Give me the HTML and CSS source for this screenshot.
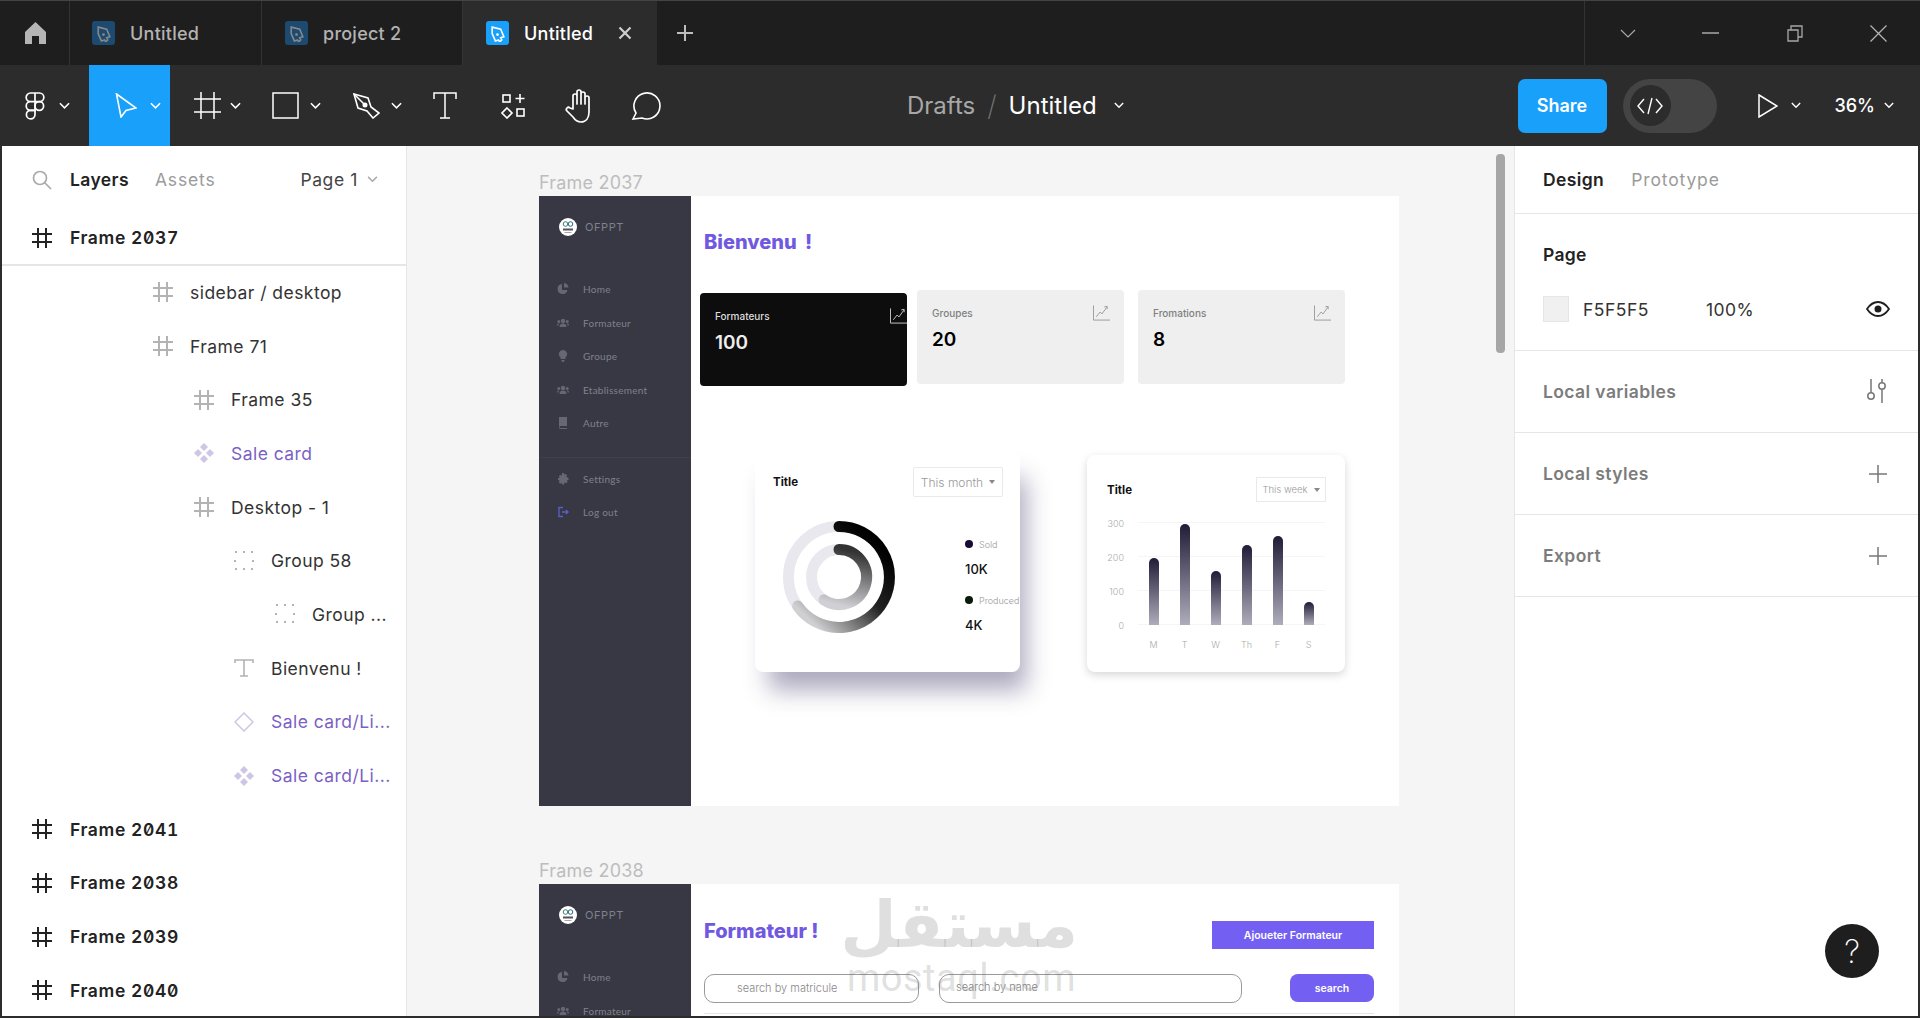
FILE: index.html
```html
<!DOCTYPE html>
<html lang="en">
<head>
    <meta charset="UTF-8">
    <meta name="viewport" content="width=device-width, initial-scale=1.0">
    <title>Untitled - Figma</title>
    <link rel="stylesheet" href="styles.css">
</head>
<body>
    <svg class="defs" width="0" height="0">
        <symbol id="hash" viewBox="0 0 20 20"><path d="M6 0v20M14 0v20M0 6h20M0 14h20" fill="none" stroke="currentColor" stroke-width="2"/></symbol>
        <symbol id="hash-thin" viewBox="0 0 27 27"><path d="M7 0v27M20 0v27M0 7h27M0 20h27" fill="none" stroke="currentColor" stroke-width="1.500"/></symbol>
        <symbol id="comp" viewBox="0 0 20 20"><path d="M10 0l4 4-4 4-4-4zM4 6l4 4-4 4-4-4zM16 6l4 4-4 4-4-4zM10 12l4 4-4 4-4-4z" fill="currentColor"/></symbol>
        <symbol id="group" viewBox="0 0 20 20"><path d="M1 1h2M9 1h2M17 1h2M1 9v2M19 9v2M1 18h2M9 18h2M17 18h2" fill="none" stroke="currentColor" stroke-width="2"/></symbol>
        <symbol id="chev" viewBox="0 0 12 8"><path d="M1 1l5 5 5-5" fill="none" stroke="currentColor" stroke-width="1.700"/></symbol>
        <symbol id="nib" viewBox="4 3 16 16"><path d="M7 5l8 2 3 7-3 1 1 2-2 2-1-2-3 1-3-7z" fill="none" stroke="currentColor" stroke-width="1.500"/><circle cx="12" cy="12" r="1.300" fill="currentColor"/></symbol>
        <symbol id="stat" viewBox="0 0 18 16"><path d="M.5 0v15.500H18M3.500 12l4-5 2 2 5-7M12 1.500l3-.5v3" fill="none" stroke="currentColor" stroke-width="1"/></symbol>
        <symbol id="m-pie" viewBox="0 0 12 12"><path d="M5 1a5 5 0 1 0 5.500 6H5zM7 0v4.500h4.500A5 5 0 0 0 7 0z" fill="currentColor"/></symbol>
        <symbol id="m-team" viewBox="0 0 12 12"><circle cx="6" cy="4" r="2.200" fill="currentColor"/><circle cx="1.800" cy="4.500" r="1.500" fill="currentColor"/><circle cx="10.200" cy="4.500" r="1.500" fill="currentColor"/><path d="M2.500 10c0-2.500 1.500-3.500 3.500-3.500s3.500 1 3.500 3.500zM0 8.500C0 7 .5 6.500 2 6.500l-.5 2zM12 8.500c0-1.500-.5-2-2-2l.5 2z" fill="currentColor"/></symbol>
        <symbol id="m-bulb" viewBox="0 0 12 12"><path d="M6 0a4 4 0 0 0-2.500 7.200V9h5V7.200A4 4 0 0 0 6 0zM4.500 10h3v1l-1 1h-1l-1-1z" fill="currentColor"/></symbol>
        <symbol id="m-book" viewBox="0 0 12 12"><path d="M2 0h8v9H3.500a1 1 0 0 0 0 2H10v1H3a1.500 1.500 0 0 1-1-1.500z" fill="currentColor"/></symbol>
        <symbol id="m-gear" viewBox="0 0 12 12"><path d="M5 0h2l.3 1.700 1.500-.8 1.400 1.400-.9 1.400L11.500 5v2l-1.700.3.900 1.500-1.400 1.400-1.500-.9L7 11.500H5l-.3-1.700-1.500.9-1.400-1.400.9-1.500L1 7V5l1.700-.3-.9-1.400 1.400-1.400 1.500.8z" fill="currentColor"/></symbol>
        <symbol id="m-out" viewBox="0 0 12 12"><path d="M6 1.500H2v9h4M5 6h6M9 4l2 2-2 2" fill="none" stroke="currentColor" stroke-width="1.300"/></symbol>
        <symbol id="logo" viewBox="0 0 18 18"><circle cx="9" cy="9" r="9" fill="#fff"/><circle cx="6.500" cy="6" r="2.300" fill="none" stroke="#2c8a6e" stroke-width="1"/><circle cx="11.500" cy="6" r="2.300" fill="none" stroke="#2c5f8a" stroke-width="1"/><path d="M4 10.500h10v2H4z" fill="#555"/><path d="M5.500 14h7v1h-7z" fill="#aaa"/></symbol>
    </svg>

    <div class="tabbar">
        <div class="tab tab-home">
            <svg width="21" height="22" viewBox="0 0 21 22"><path d="M10.500 0L21 10v12h-7v-8H7v8H0V10z" fill="#b5b5b5"/></svg>
        </div>
        <div class="tab tab-file tab-one">
            <span class="file-icon"><svg width="17" height="17"><use href="#nib"/></svg></span>
            <span>Untitled</span>
        </div>
        <div class="tab tab-file tab-two">
            <span class="file-icon"><svg width="17" height="17"><use href="#nib"/></svg></span>
            <span>project 2</span>
        </div>
        <div class="tab tab-file tab-active">
            <span class="file-icon"><svg width="17" height="17"><use href="#nib"/></svg></span>
            <span>Untitled</span>
            <svg class="tab-close" width="14" height="14" viewBox="0 0 14 14"><path d="M1.500 1.500l11 11M12.500 1.500l-11 11" stroke="#cfcfcf" stroke-width="2.200"/></svg>
        </div>
        <svg class="tab-plus" width="16" height="16" viewBox="0 0 16 16"><path d="M8 0v16M0 8h16" stroke="#bdbdbd" stroke-width="2"/></svg>
        <div class="win-controls">
            <svg class="win-chev" width="16" height="9" viewBox="0 0 16 9"><path d="M1 1l7 7 7-7" fill="none" stroke="#a8a8a8" stroke-width="1.200"/></svg>
            <svg class="win-min" width="17" height="2" viewBox="0 0 17 2"><path d="M0 1h17" stroke="#a8a8a8" stroke-width="1.500"/></svg>
            <svg class="win-max" width="16" height="17" viewBox="0 0 16 17"><path d="M1 5h10v11H1zM4 5V1h11v11h-4" fill="none" stroke="#a8a8a8" stroke-width="1.300"/></svg>
            <svg class="win-close" width="17" height="17" viewBox="0 0 17 17"><path d="M.5.500l16 16M16.500.500l-16 16" stroke="#b5b5b5" stroke-width="1.200"/></svg>
        </div>
    </div>

    <div class="toolbar">
        <div class="tools">
            <div class="tool tool-brand">
                <svg width="20" height="28" viewBox="0 0 20 28" fill="none" stroke="#fff" stroke-width="1.700"><path d="M10 1H5.500a4.300 4.300 0 0 0 0 8.700H10zM10 1h4.500a4.300 4.300 0 0 1 0 8.700H10zM10 9.700H5.500a4.200 4.200 0 0 0 0 8.600H10z"/><circle cx="14.300" cy="14" r="4.300"/><path d="M10 18.300H5.500a4.300 4.300 0 1 0 4.500 4.300z"/></svg>
                <svg class="chev" width="11" height="8"><use href="#chev"/></svg>
            </div>
            <div class="tool tool-move">
                <svg width="22" height="25" viewBox="0 0 22 25"><path d="M1.500 1L21 15l-10 2.500L6 24z" fill="none" stroke="#fff" stroke-width="1.600"/></svg>
                <svg class="chev" width="11" height="8"><use href="#chev"/></svg>
            </div>
            <div class="tool tool-frame">
                <svg width="27" height="27"><use href="#hash-thin"/></svg>
                <svg class="chev" width="11" height="8"><use href="#chev"/></svg>
            </div>
            <div class="tool tool-rect">
                <svg width="27" height="27" viewBox="0 0 27 27"><rect x="1" y="1" width="25" height="25" fill="none" stroke="#fff" stroke-width="1.500"/></svg>
                <svg class="chev" width="11" height="8"><use href="#chev"/></svg>
            </div>
            <div class="tool tool-pen">
                <svg width="27" height="26" viewBox="0 0 27 26" fill="none" stroke="#fff" stroke-width="1.600"><path d="M1 1l14 4 3 9 8 6-6 5-6-7-9-3z"/><circle cx="12" cy="12" r="1.700" fill="#fff"/><path d="M1 1l11 11"/></svg>
                <svg class="chev" width="11" height="8"><use href="#chev"/></svg>
            </div>
            <div class="tool tool-text">
                <svg width="24" height="27" viewBox="0 0 24 27" fill="none" stroke="#fff" stroke-width="1.500"><path d="M1 7V1h22v6M12 1v25M7 26h10"/></svg>
            </div>
            <div class="tool tool-res">
                <svg width="25" height="26" viewBox="0 0 25 26" fill="none" stroke="#fff" stroke-width="1.600"><rect x="2" y="2" width="7" height="7"/><path d="M19 1v9M14.500 5.500h9"/><path d="M6 15l5 5-5 5-5-5z"/><rect x="16" y="16" width="7" height="7"/></svg>
            </div>
            <div class="tool tool-hand">
                <svg width="32" height="34" viewBox="0 0 32 34" fill="none" stroke="#fff" stroke-width="1.700" stroke-linejoin="round"><path d="M9 20V7a2 2 0 0 1 4 0v8-12a2 2 0 0 1 4 0v12V5a2 2 0 0 1 4 0v10-6a2 2 0 0 1 4 0v14c0 6-3 10-8 10-4 0-6-2-8-5l-6-6c-2-2 1-5 3-3z"/></svg>
            </div>
            <div class="tool tool-comment">
                <svg width="31" height="28" viewBox="0 0 31 28"><path d="M2 27l3-6a13 13 0 1 1 6 5z" fill="none" stroke="#fff" stroke-width="1.600"/></svg>
            </div>
        </div>
        <div class="crumbs">
            <span class="crumb-dim">Drafts</span>
            <span class="crumb-sep">/</span>
            <span class="crumb-name">Untitled</span>
            <svg class="chev" width="10" height="7"><use href="#chev"/></svg>
        </div>
        <div class="actions">
            <div class="share">Share</div>
            <div class="dev-toggle">
                <span class="dev-knob"><svg width="26" height="20" viewBox="0 0 26 20" fill="none" stroke="#fff" stroke-width="1.400"><path d="M7 3L1 10l6 7M19 3l6 7-6 7M15 2l-4 16"/></svg></span>
            </div>
            <svg class="play" width="20" height="24" viewBox="0 0 20 24"><path d="M1 1l18 11L1 23z" fill="none" stroke="#fff" stroke-width="1.500"/></svg>
            <svg class="chev" width="10" height="7"><use href="#chev"/></svg>
            <span class="zoom-value">36%</span>
            <svg class="chev" width="10" height="7"><use href="#chev"/></svg>
        </div>
    </div>

    <div class="workspace">
        <aside class="layers">
            <div class="layers-tabs">
                <svg class="search-icon" width="20" height="20" viewBox="0 0 20 20" fill="none" stroke="#aaa" stroke-width="1.700"><circle cx="8" cy="8" r="6.500"/><path d="M12.500 12.500L19 19"/></svg>
                <span class="tab-strong">Layers</span>
                <span class="tab-muted">Assets</span>
                <span class="page-pick">Page 1 <svg width="11" height="7"><use href="#chev"/></svg></span>
            </div>
            <div class="row row-top row-pinned"><svg class="ic" width="20" height="20"><use href="#hash"/></svg>Frame 2037</div>
            <div class="rows">
                <div class="row d2"><svg class="ic" width="20" height="20"><use href="#hash"/></svg>sidebar / desktop</div>
                <div class="row d2"><svg class="ic" width="20" height="20"><use href="#hash"/></svg>Frame 71</div>
                <div class="row d3"><svg class="ic" width="20" height="20"><use href="#hash"/></svg>Frame 35</div>
                <div class="row d3 purple"><svg class="ic" width="20" height="20"><use href="#comp"/></svg>Sale card</div>
                <div class="row d3"><svg class="ic" width="20" height="20"><use href="#hash"/></svg>Desktop - 1</div>
                <div class="row d4"><svg class="ic" width="20" height="20"><use href="#group"/></svg>Group 58</div>
                <div class="row d5"><svg class="ic" width="20" height="20"><use href="#group"/></svg>Group ...</div>
                <div class="row d4"><svg class="ic" width="20" height="20" viewBox="0 0 20 20" fill="none" stroke="currentColor" stroke-width="1.600"><path d="M1 5V2h18v3M10 2v16M6 18h8"/></svg>Bienvenu !</div>
                <div class="row d4 purple"><svg class="ic" width="20" height="20" viewBox="0 0 20 20"><path d="M10 1l9 9-9 9-9-9z" fill="none" stroke="currentColor" stroke-width="1.500"/></svg>Sale card/Li...</div>
                <div class="row d4 purple"><svg class="ic" width="20" height="20"><use href="#comp"/></svg>Sale card/Li...</div>
                <div class="row row-top"><svg class="ic" width="20" height="20"><use href="#hash"/></svg>Frame 2041</div>
                <div class="row row-top"><svg class="ic" width="20" height="20"><use href="#hash"/></svg>Frame 2038</div>
                <div class="row row-top"><svg class="ic" width="20" height="20"><use href="#hash"/></svg>Frame 2039</div>
                <div class="row row-top"><svg class="ic" width="20" height="20"><use href="#hash"/></svg>Frame 2040</div>
            </div>
        </aside>

        <main class="canvas">
            <section class="artboard artboard-one">
                <div class="artboard-label">Frame 2037</div>
                <div class="frame">
                    <nav class="side">
                        <div class="side-logo"><svg width="18" height="18"><use href="#logo"/></svg>OFPPT</div>
                        <div class="side-menu">
                            <div class="side-item"><svg width="12" height="12"><use href="#m-pie"/></svg>Home</div>
                            <div class="side-item"><svg width="12" height="12"><use href="#m-team"/></svg>Formateur</div>
                            <div class="side-item"><svg width="12" height="12"><use href="#m-bulb"/></svg>Groupe</div>
                            <div class="side-item"><svg width="12" height="12"><use href="#m-team"/></svg>Etablissement</div>
                            <div class="side-item"><svg width="12" height="12"><use href="#m-book"/></svg>Autre</div>
                        </div>
                        <div class="side-foot">
                            <div class="side-item"><svg width="12" height="12"><use href="#m-gear"/></svg>Settings</div>
                            <div class="side-item side-logout"><svg width="12" height="12"><use href="#m-out"/></svg>Log out</div>
                        </div>
                    </nav>
                    <div class="board">
                        <h1 class="board-title">Bienvenu !</h1>
                        <div class="stats">
                            <div class="stat stat-dark">
                                <div class="stat-label">Formateurs</div>
                                <div class="stat-value">100</div>
                                <svg class="stat-icon" width="17" height="16"><use href="#stat"/></svg>
                            </div>
                            <div class="stat">
                                <div class="stat-label">Groupes</div>
                                <div class="stat-value">20</div>
                                <svg class="stat-icon" width="17" height="16"><use href="#stat"/></svg>
                            </div>
                            <div class="stat stat-last">
                                <div class="stat-label">Fromations</div>
                                <div class="stat-value">8</div>
                                <svg class="stat-icon" width="17" height="16"><use href="#stat"/></svg>
                            </div>
                        </div>
                        <div class="charts">
                            <div class="chart-card donut-card">
                                <div class="chart-head">
                                    <span class="chart-title">Title</span>
                                    <span class="picker picker-month">This month <i class="caret"></i></span>
                                </div>
                                <div class="donut-body">
                                    <svg class="donut" width="112" height="112" viewBox="0 0 112 112" fill="none">
                                        <defs>
                                            <linearGradient id="ringA" x1="0.8" y1="0.1" x2="0.1" y2="0.9">
                                                <stop offset="0" stop-color="#000"/>
                                                <stop offset="0.45" stop-color="#222"/>
                                                <stop offset="1" stop-color="#d0d0d2"/>
                                            </linearGradient>
                                            <linearGradient id="ringB" x1="0.5" y1="0" x2="0.3" y2="1">
                                                <stop offset="0" stop-color="#333"/>
                                                <stop offset="1" stop-color="#d0d0d4"/>
                                            </linearGradient>
                                        </defs>
                                        <circle cx="56" cy="56" r="50.500" stroke="#e9e8ee" stroke-width="11"/>
                                        <circle cx="56" cy="56" r="27.500" stroke="#e9e8ee" stroke-width="11"/>
                                        <path d="M56 5.500A50.500 50.500 0 1 1 14.600 85" stroke="url(#ringA)" stroke-width="11" stroke-linecap="round"/>
                                        <path d="M56 28.500A27.500 27.500 0 1 1 41 79" stroke="url(#ringB)" stroke-width="11" stroke-linecap="round"/>
                                    </svg>
                                    <div class="legend">
                                        <div class="legend-name"><i class="dot dot-sold"></i>Sold</div>
                                        <div class="legend-value">10K</div>
                                        <div class="legend-name legend-second"><i class="dot dot-prod"></i>Produced</div>
                                        <div class="legend-value">4K</div>
                                    </div>
                                </div>
                            </div>
                            <div class="chart-card bars-card">
                                <div class="chart-head">
                                    <span class="chart-title">Title</span>
                                    <span class="picker picker-week">This week <i class="caret"></i></span>
                                </div>
                                <div class="bars-body">
                                    <div class="y-axis"><span>300</span><span>200</span><span>100</span><span>0</span></div>
                                    <div class="plot-wrap">
                                        <div class="plot">
                                            <div class="bar-col"><i class="bar" style="height:67px"></i></div>
                                            <div class="bar-col"><i class="bar" style="height:101px"></i></div>
                                            <div class="bar-col"><i class="bar" style="height:54px"></i></div>
                                            <div class="bar-col"><i class="bar" style="height:80px"></i></div>
                                            <div class="bar-col"><i class="bar" style="height:89px"></i></div>
                                            <div class="bar-col"><i class="bar" style="height:23px"></i></div>
                                        </div>
                                        <div class="x-axis"><span>M</span><span>T</span><span>W</span><span>Th</span><span>F</span><span>S</span></div>
                                    </div>
                                </div>
                            </div>
                        </div>
                    </div>
                </div>
            </section>

            <section class="artboard artboard-two">
                <div class="artboard-label">Frame 2038</div>
                <div class="frame">
                    <nav class="side">
                        <div class="side-logo"><svg width="18" height="18"><use href="#logo"/></svg>OFPPT</div>
                        <div class="side-menu">
                            <div class="side-item"><svg width="12" height="12"><use href="#m-pie"/></svg>Home</div>
                            <div class="side-item"><svg width="12" height="12"><use href="#m-team"/></svg>Formateur</div>
                            <div class="side-item"><svg width="12" height="12"><use href="#m-bulb"/></svg>Groupe</div>
                        </div>
                    </nav>
                    <div class="board board-list">
                        <div class="list-head">
                            <h1 class="board-title">Formateur !</h1>
                            <div class="add-btn">Ajoueter Formateur</div>
                        </div>
                        <div class="filters">
                            <div class="field field-one">search by matricule</div>
                            <div class="field field-two">search by name</div>
                            <div class="search-btn">search</div>
                        </div>
                        <div class="table-line"></div>
                    </div>
                </div>
            </section>

            <div class="scrollbar"></div>
        </main>

        <aside class="props">
            <div class="props-tabs">
                <span class="tab-strong">Design</span>
                <span class="tab-muted">Prototype</span>
            </div>
            <div class="props-page">
                <div class="page-title">Page</div>
                <div class="page-fill">
                    <span class="swatch"></span>
                    <span class="fill-hex">F5F5F5</span>
                    <span class="fill-pct">100%</span>
                    <svg class="eye" width="24" height="16" viewBox="0 0 24 16"><path d="M1 8c3-4.500 7-7 11-7s8 2.500 11 7c-3 4.500-7 7-11 7S4 12.500 1 8z" fill="none" stroke="#1e1e1e" stroke-width="1.800"/><circle cx="12" cy="8" r="3.500" fill="#1e1e1e"/></svg>
                </div>
            </div>
            <div class="prop-row">
                <span>Local variables</span>
                <svg width="21" height="25" viewBox="0 0 21 25" fill="none" stroke="#777" stroke-width="1.500"><path d="M5 0v14M16 0v24"/><circle cx="5" cy="17" r="3.200" fill="#fff"/><circle cx="16" cy="7" r="3.200" fill="#fff"/></svg>
            </div>
            <div class="prop-row">
                <span>Local styles</span>
                <svg width="18" height="18" viewBox="0 0 18 18"><path d="M9 0v18M0 9h18" stroke="#777" stroke-width="1.500"/></svg>
            </div>
            <div class="prop-row">
                <span>Export</span>
                <svg width="18" height="18" viewBox="0 0 18 18"><path d="M9 0v18M0 9h18" stroke="#777" stroke-width="1.500"/></svg>
            </div>
            <div class="help">?</div>
        </aside>
    </div>

    <div class="watermark">
        <div class="wm-ar" lang="ar" dir="rtl">مستقل</div>
        <div class="wm-en">mostaql.com</div>
    </div>
</body>
</html>
```

FILE: styles.css
```css
* {
    box-sizing: border-box;
}
html, body {
    margin: 0;
    height: 100%;
}
body {
    position: relative;
    width: 1920px;
    height: 1018px;
    overflow: hidden;
    font-family: Inter, "Noto Sans", sans-serif;
    background: #1e1e1e;
    color: #222;
}
.defs {
    position: absolute;
}
svg {
    flex: none;
    display: block;
}

/* tabs */
.tabbar {
    display: flex;
    align-items: stretch;
    height: 65px;
    background: #1e1e1e;
    border-top: 1px solid #444;
    color: #b3b3b3;
    font-size: 18px;
    font-weight: 500;
    letter-spacing: 0.25px;
}
.tab {
    display: flex;
    align-items: center;
    border-right: 1px solid #333;
}
.tab-home {
    width: 70px;
    padding-left: 25px;
}
.tab-file {
    gap: 15px;
}
.tab-one {
    width: 192px;
    padding-left: 22px;
}
.tab-two {
    width: 201px;
    padding-left: 23px;
}
.tab-active {
    width: 194px;
    padding-left: 23px;
    background: #2c2c2c;
    color: #fff;
    border-right: 0;
}
.file-icon {
    display: flex;
    align-items: center;
    justify-content: center;
    width: 23px;
    height: 24px;
    border-radius: 3px;
    background: #1c4a70;
    color: #888;
}
.tab-active .file-icon {
    background: #18a0fb;
    color: #fff;
}
.tab-close {
    margin-left: 10px;
}
.tab-plus {
    align-self: center;
    margin-left: 20px;
}
.win-controls {
    position: relative;
    display: flex;
    align-items: center;
    margin-left: auto;
    width: 336px;
    padding-left: 35px;
    border-left: 1px solid #333;
}
.win-min {
    margin-left: 66px;
}
.win-max {
    margin-left: 68px;
}
.win-close {
    margin-left: 67px;
}

/* toolbar */
.toolbar {
    display: flex;
    align-items: center;
    height: 81px;
    background: #2c2c2c;
    color: #fff;
}
.tools {
    display: flex;
    width: 907px;
    height: 100%;
}
.tool {
    display: flex;
    align-items: center;
    height: 100%;
    gap: 11px;
}
.chev {
    color: #fff;
}
.tool-brand {
    width: 89px;
    padding-left: 25px;
    gap: 14px;
}
.tool-move {
    width: 81px;
    padding-left: 26px;
    gap: 13px;
    background: #18a0fb;
}
.tool-frame {
    width: 102px;
    padding-left: 24px;
    gap: 9px;
}
.tool-rect {
    width: 81px;
}
.tool-pen {
    width: 80px;
}
.tool-text {
    width: 68px;
}
.tool-res {
    width: 63px;
}
.tool-hand {
    width: 67px;
}
.crumbs {
    display: flex;
    align-items: center;
    font-size: 24px;
}
.crumb-dim {
    color: #a8a8a8;
}
.crumb-sep {
    margin: 0 12px;
    color: #777;
    font-weight: 200;
    font-size: 28px;
}
.crumb-name {
    margin-right: 17px;
}
.actions {
    display: flex;
    align-items: center;
    margin-left: auto;
    padding-right: 26px;
}
.share {
    display: flex;
    align-items: center;
    justify-content: center;
    width: 89px;
    height: 54px;
    border-radius: 7px;
    background: #18a0fb;
    font-size: 18px;
    font-weight: 600;
}
.dev-toggle {
    display: flex;
    align-items: center;
    width: 94px;
    height: 54px;
    margin-left: 16px;
    padding-left: 7px;
    border-radius: 27px;
    background: #444;
}
.dev-knob {
    display: flex;
    align-items: center;
    justify-content: center;
    width: 41px;
    height: 41px;
    border-radius: 50%;
    background: #2c2c2c;
}
.play {
    margin-left: 41px;
}
.play + .chev {
    margin-left: 13px;
}
.zoom-value {
    margin: 0 9px 0 34px;
    font-size: 18px;
    font-weight: 500;
}

/* main area */
.workspace {
    display: flex;
    height: 872px;
    border: solid #2c2c2c;
    border-width: 0 2px 2px;
    background: #fff;
}
.layers {
    flex: none;
    width: 405px;
    border-right: 1px solid #e6e6e6;
    background: #fff;
    font-size: 17.5px;
    overflow: hidden;
}
.layers-tabs {
    position: relative;
    display: flex;
    align-items: center;
    height: 67px;
    padding-left: 30px;
}
.search-icon {
    margin-right: 18px;
}
.tab-strong {
    font-weight: 600;
    letter-spacing: 0.4px;
    color: #222;
}
.tab-muted {
    margin-left: 26px;
    color: #9b9b9b;
    letter-spacing: 0.85px;
}
.page-pick {
    display: flex;
    align-items: center;
    gap: 9px;
    margin-left: auto;
    margin-right: 28px;
    color: #444;
    letter-spacing: 0.6px;
}
.page-pick svg {
    color: #aaa;
}
.row {
    display: flex;
    align-items: center;
    height: 53.7px;
    white-space: nowrap;
    letter-spacing: 0.45px;
    color: #333;
}
.ic {
    margin-right: 17px;
    color: #b3b3b3;
}
.row-top {
    padding-left: 31px;
    font-weight: 600;
    letter-spacing: 0.6px;
    color: #222;
    font-feature-settings: "zero", "tnum";
}
.row-top .ic {
    margin-left: -1px;
    margin-right: 18px;
    color: #222;
}
.row-pinned {
    height: 55px;
    margin-top: -2px;
    border-bottom: 2px solid #e6e6e6;
}
.rows {
    margin-top: -0.5px;
}
.d2 {
    padding-left: 151px;
}
.d3 {
    padding-left: 192px;
}
.d4 {
    padding-left: 232px;
}
.d5 {
    padding-left: 273px;
}
.purple {
    color: #7b5fc4;
}
.purple .ic {
    color: #cfc5e6;
}

/* canvas */
.canvas {
    position: relative;
    flex: 1;
    overflow: hidden;
    background: #f5f5f5;
}
.artboard {
    position: absolute;
    left: 132px;
    width: 860px;
}
.artboard-one {
    top: 25px;
}
.artboard-two {
    top: 713px;
}
.artboard-label {
    height: 22px;
    margin-bottom: 3px;
    font-size: 18px;
    line-height: 24px;
    letter-spacing: 0.2px;
    color: #bdbdbd;
}
.frame {
    display: flex;
    height: 610px;
    background: #fff;
}
.side {
    flex: none;
    width: 152px;
    padding-top: 22px;
    background: #373843;
    color: #80818b;
    font-size: 10px;
}
.side-logo {
    display: flex;
    align-items: center;
    gap: 8px;
    height: 18px;
    padding-left: 20px;
    font-family: Inter, sans-serif;
    font-size: 11px;
    letter-spacing: 0.6px;
}
.side-menu {
    margin-top: 36.5px;
    height: 185.5px;
    border-bottom: 1px solid #3f404b;
}
.side-foot {
    margin-top: 4px;
}
.side-item {
    display: flex;
    align-items: center;
    gap: 14px;
    height: 33.5px;
    padding-left: 18px;
    font-family: Lato, sans-serif;
    font-size: 10px;
    letter-spacing: 0.25px;
}
.side-item svg {
    color: #666772;
}
.side-logout svg {
    color: #5c5fc8;
}
.board {
    flex: 1;
    min-width: 0;
    padding-top: 34px;
}
.board-title {
    margin: 0 0 0 13px;
    font-size: 20px;
    line-height: 24px;
    font-weight: 800;
    color: #7059e0;
    word-spacing: 4px;
}
.stats {
    display: flex;
    align-items: flex-start;
    gap: 10px;
    margin-top: 36px;
    padding-left: 9px;
}
.stat {
    position: relative;
    width: 207px;
    height: 94px;
    padding: 15px 15px 0;
    border-radius: 4px;
    background: #efefef;
    color: #000;
}
.stat-dark {
    margin-top: 3px;
    height: 93px;
    background: #0d0d0d;
    color: #eee;
    overflow: hidden;
}
.stat-last {
    margin-left: 4px;
}
.stat-label {
    font-size: 10px;
    line-height: 16px;
    font-weight: 500;
    color: #808080;
}
.stat-dark .stat-label {
    color: #ddd;
}
.stat-value {
    margin-top: 4px;
    font-size: 19px;
    line-height: 30px;
    font-weight: 600;
}
.stat-icon {
    position: absolute;
    top: 15px;
    right: 14px;
    color: #999;
}
.stat-dark .stat-icon {
    right: 0;
    color: #ccc;
}
.charts {
    display: flex;
    align-items: flex-start;
    gap: 67px;
    margin-top: 66px;
    margin-left: 64px;
}
.chart-card {
    flex: none;
    border-radius: 8px;
    background: #fff;
}
.donut-card {
    width: 265px;
    height: 220px;
    box-shadow: 10px 22px 24px -4px rgba(60, 50, 100, 0.42);
}
.bars-card {
    width: 258px;
    height: 217px;
    margin-top: 3px;
    box-shadow: 0 3px 8px rgba(0, 0, 0, 0.16);
}
.chart-head {
    display: flex;
    align-items: center;
    justify-content: space-between;
}
.donut-card .chart-head {
    padding: 15px 17px 0 18px;
    height: 45px;
}
.bars-card .chart-head {
    padding: 22px 19px 0 20px;
    height: 47px;
}
.chart-title {
    font-size: 11.500px;
    font-weight: 700;
    color: #111;
}
.picker {
    display: flex;
    align-items: center;
    justify-content: center;
    gap: 6px;
    border: 1px solid #e9e9e9;
    color: #999;
    font-weight: 300;
}
.picker-month {
    width: 90px;
    height: 30px;
    border-radius: 2px;
    font-size: 12px;
}
.picker-week {
    width: 70px;
    height: 25px;
    font-size: 9.500px;
}
.caret {
    width: 0;
    height: 0;
    border: 3px solid transparent;
    border-top: 4px solid #888;
    border-bottom: 0;
}
.donut-body {
    display: flex;
    padding: 24px 0 0 28px;
}
.legend {
    width: 55px;
    margin-left: 70px;
    padding-top: 17px;
    overflow: hidden;
    white-space: nowrap;
}
.legend-name {
    display: flex;
    align-items: center;
    gap: 6px;
    height: 12px;
    font-size: 9px;
    font-weight: 300;
    color: #999;
}
.legend-second {
    margin-top: 17px;
}
.legend-value {
    margin-top: 11px;
    font-size: 13px;
    line-height: 16px;
    font-weight: 500;
    color: #111;
}
.dot {
    flex: none;
    width: 8px;
    height: 8px;
    border-radius: 50%;
    background: #1a0a3a;
}
.dot-prod {
    background: #0a1a0a;
}
.bars-body {
    display: flex;
    margin-top: 22px;
}
.y-axis {
    display: flex;
    flex-direction: column;
    justify-content: space-between;
    width: 37px;
    height: 114px;
    margin-top: -6px;
    text-align: right;
    font-size: 9px;
    line-height: 12px;
    font-weight: 300;
    color: #aaa;
}
.plot-wrap {
    margin-top: -2px;
    margin-left: 14px;
}
.plot {
    display: grid;
    grid-template-columns: repeat(6, 31px);
    align-items: end;
    width: 187px;
    height: 103px;
    background: repeating-linear-gradient(#f5f5f6 0 1px, transparent 1px 34px);
}
.bar-col {
    display: flex;
    justify-content: center;
    align-items: flex-end;
    height: 102px;
}
.bar {
    display: block;
    width: 10px;
    border-radius: 5px 5px 0 0;
    background: linear-gradient(#201c38, #aeadba);
}
.x-axis {
    display: grid;
    grid-template-columns: repeat(6, 31px);
    margin-top: 14px;
    text-align: center;
    font-size: 9px;
    line-height: 12px;
    font-weight: 300;
    color: #aaa;
}
.board-list {
    padding-top: 37px;
}
.list-head {
    display: flex;
    align-items: flex-start;
    justify-content: space-between;
    height: 28px;
    padding-right: 25px;
}
.list-head .board-title {
    line-height: 20px;
    word-spacing: 0;
}
.add-btn {
    display: flex;
    align-items: center;
    justify-content: center;
    width: 162px;
    height: 28px;
    background: #7360f2;
    color: #fff;
    font-size: 10.500px;
    font-weight: 600;
}
.filters {
    display: flex;
    align-items: flex-start;
    margin-top: 25px;
    padding: 0 25px 0 13px;
}
.field {
    height: 29px;
    border: 1px solid #999;
    border-radius: 10px;
    color: #888;
    font-size: 11px;
    line-height: 27px;
    font-weight: 300;
}
.field-one {
    width: 215px;
    padding-left: 32px;
}
.field-two {
    width: 303px;
    margin-left: 20px;
    padding-left: 16px;
    line-height: 24px;
}
.search-btn {
    display: flex;
    align-items: center;
    justify-content: center;
    width: 84px;
    height: 28px;
    margin-left: auto;
    border-radius: 8px;
    background: #7360f2;
    color: #fff;
    font-size: 10.500px;
    font-weight: 600;
}
.table-line {
    margin: 10px 25px 0 13px;
    border-top: 1px solid #e6e6e6;
}
.scrollbar {
    position: absolute;
    top: 8px;
    left: 1089px;
    width: 9px;
    height: 199px;
    border-radius: 4px;
    background: #a6a6a6;
}

/* right panel */
.props {
    position: relative;
    flex: none;
    width: 404px;
    border-left: 1px solid #e6e6e6;
    background: #fff;
    font-size: 17.5px;
}
.props-tabs {
    display: flex;
    align-items: center;
    height: 68px;
    padding-left: 28px;
    border-bottom: 1px solid #e6e6e6;
}
.props-tabs .tab-muted {
    margin-left: 27px;
}
.props-page {
    height: 137px;
    padding: 30px 28px 0;
    border-bottom: 1px solid #e6e6e6;
}
.page-title {
    font-weight: 600;
    letter-spacing: 0.3px;
    line-height: 22px;
}
.page-fill {
    display: flex;
    align-items: center;
    margin-top: 30px;
    letter-spacing: 0.5px;
    color: #333;
}
.swatch {
    width: 26px;
    height: 26px;
    background: #f0f0f0;
    border: 1px solid #e6e6e6;
}
.fill-hex {
    margin-left: 14px;
}
.fill-pct {
    margin-left: 57px;
}
.eye {
    margin-left: auto;
    margin-right: 0;
}
.prop-row {
    display: flex;
    align-items: center;
    justify-content: space-between;
    height: 82px;
    padding: 0 31px 0 28px;
    border-bottom: 1px solid #e6e6e6;
    color: #7c7c7c;
    font-weight: 600;
    letter-spacing: 0.4px;
}
.help {
    position: absolute;
    top: 778px;
    left: 310px;
    display: flex;
    align-items: center;
    justify-content: center;
    width: 54px;
    height: 54px;
    border-radius: 50%;
    background: #1e1e1e;
    color: #fff;
    font-size: 32px;
    font-weight: 200;
}

/* mostaql stamp over everything */
.watermark {
    position: absolute;
    top: 880px;
    left: 848px;
    width: 230px;
    text-align: center;
    color: rgba(120, 120, 120, 0.24);
    pointer-events: none;
}
.wm-ar {
    font-family: "DejaVu Sans", sans-serif;
    font-size: 65px;
    line-height: 90px;
    font-weight: 700;
}
.wm-en {
    margin-top: -8px;
    margin-left: -3px;
    font-family: Roboto, sans-serif;
    font-size: 38px;
    line-height: 32px;
    letter-spacing: 0.5px;
}
```
